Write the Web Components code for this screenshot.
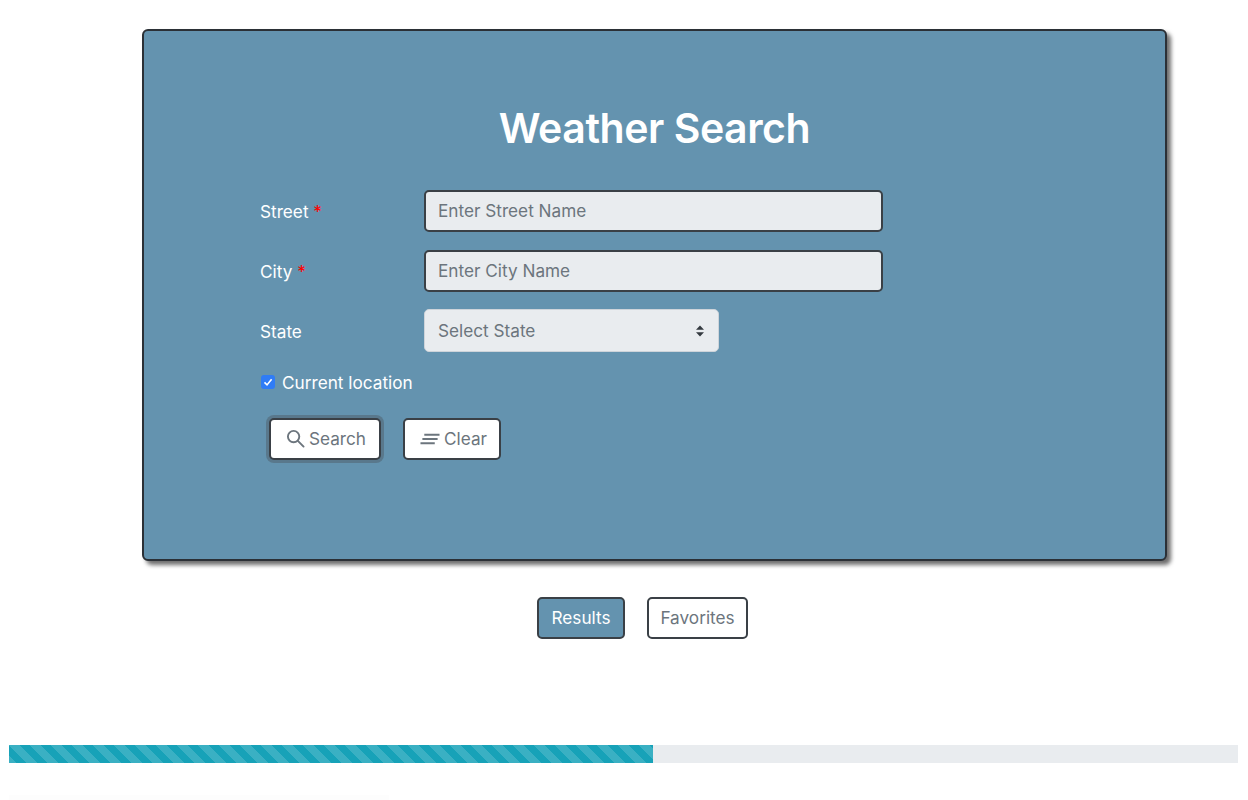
<!DOCTYPE html>
<html lang="en">
<head>
<meta charset="utf-8">
<title>Weather Search</title>
<style>
  html, body { margin: 0; background: #fff; }
  body { font-family: Inter, "Liberation Sans", sans-serif; height: 800px; overflow: hidden; }
</style>
</head>
<body>
<weather-app></weather-app>

<script>
class FormRow extends HTMLElement {
  constructor() {
    super();
    this.attachShadow({ mode: "open" }).innerHTML = `
      <style>
        :host { display: flex; align-items: center; height: 42px; margin-bottom: 18px; }
        .label { width: 164px; color: #fff; font-size: 17.2px; }
        .req { color: #f00; }
      </style>
      <div class="label">${this.getAttribute("label")}${this.hasAttribute("required") ? ' <span class="req">*</span>' : ""}</div>
      <slot></slot>`;
  }
}
customElements.define("form-row", FormRow);

class TextField extends HTMLElement {
  constructor() {
    super();
    this.attachShadow({ mode: "open" }).innerHTML = `
      <style>
        :host { display: block; width: 459px; }
        input {
          box-sizing: border-box; display: block; width: 100%; height: 42px; padding: 0 12px 1px;
          background: #e9ecef; border: 2px solid #3a4046; border-radius: 5px; outline: none;
          font: 17.2px Inter, "Liberation Sans", sans-serif; color: #495057;
        }
        input::placeholder { color: #6c757d; opacity: 1; }
      </style>
      <input type="text" placeholder="${this.getAttribute("placeholder")}">`;
  }
}
customElements.define("text-field", TextField);

class SelectField extends HTMLElement {
  constructor() {
    super();
    this.attachShadow({ mode: "open" }).innerHTML = `
      <style>
        :host {
          display: flex; align-items: center; justify-content: space-between; box-sizing: border-box;
          width: 295px; height: 43px; margin-top: -1px; padding: 0 13px;
          background: #e9ecef; border: 1px solid #ced4da; border-radius: 5px;
          color: #6c757d; font-size: 17.2px;
        }
        svg { display: block; }
      </style>
      <slot></slot>
      <svg width="10" height="12" viewBox="0 0 10 12"><path d="M5 0.5 L9 4.8 H1 Z M1 7.2 H9 L5 11.5 Z" fill="#343a40"/></svg>`;
  }
}
customElements.define("select-field", SelectField);

class CheckField extends HTMLElement {
  constructor() {
    super();
    this.attachShadow({ mode: "open" }).innerHTML = `
      <style>
        :host { display: flex; align-items: center; gap: 7px; color: #fff; font-size: 17.2px; padding-left: 1px; height: 24px; }
        .box { width: 14px; height: 14px; background: #2f7cf6; border-radius: 3px; display: flex; align-items: center; justify-content: center; }
      </style>
      <span class="box"><svg width="12" height="12" viewBox="0 0 12 12"><path d="M2.5 6.4 L5 8.9 L9.6 3.2" fill="none" stroke="#fff" stroke-width="1.6"/></svg></span>
      <slot></slot>`;
  }
}
customElements.define("check-field", CheckField);

class ActionButton extends HTMLElement {
  constructor() {
    super();
    this.attachShadow({ mode: "open" }).innerHTML = `
      <style>
        :host {
          display: inline-flex; align-items: center; justify-content: center; box-sizing: border-box;
          height: 42px; padding-bottom: 1px; background: #fff; color: #6c757d; font-size: 17.2px;
          border: 2px solid #3a4046; border-radius: 5px; gap: 4px;
        }
        :host([focused]) { box-shadow: 0 0 0 3px rgba(73, 80, 87, .4); padding-left: 2px; }
        :host([active]) { background: #6493af; color: #fff; }
        ::slotted(svg) { display: block; }
      </style>
      <slot></slot>`;
  }
}
customElements.define("action-button", ActionButton);

class StripedProgress extends HTMLElement {
  constructor() {
    super();
    this.attachShadow({ mode: "open" }).innerHTML = `
      <style>
        :host { display: block; height: 18px; background: #e9ecef; }
        .bar {
          height: 100%;
          background-color: #17a2b8;
          background-image: linear-gradient(45deg, rgba(255,255,255,.15) 25%, transparent 25%, transparent 50%, rgba(255,255,255,.15) 50%, rgba(255,255,255,.15) 75%, transparent 75%, transparent);
          background-size: 21px 21px;
        }
      </style>
      <div class="bar" style="width:${this.getAttribute("value")}%"></div>`;
  }
}
customElements.define("striped-progress", StripedProgress);

class WeatherCard extends HTMLElement {
  constructor() {
    super();
    this.attachShadow({ mode: "open" }).innerHTML = `
      <style>
        :host {
          display: block; box-sizing: border-box; width: 1025px; height: 532px; margin-left: 142px;
          padding: 70px 116px 0; background: #6493af;
          border: 2px solid #2b3036; border-radius: 6px;
          box-shadow: 4px 4px 4px #6e6e6e;
        }
        h1 { margin: 0 0 35px; text-align: center; color: #fff; font-size: 41px; letter-spacing: -0.45px; line-height: 54px; font-weight: 600; }
        .actions { display: flex; gap: 22px; margin: 24px 0 0 9px; }
      </style>
      <h1>Weather Search</h1>
      <slot></slot>
      <div class="actions"><slot name="actions"></slot></div>`;
  }
}
customElements.define("weather-card", WeatherCard);

class WeatherApp extends HTMLElement {
  constructor() {
    super();
    this.attachShadow({ mode: "open" }).innerHTML = `
      <style>
        :host { display: block; padding-top: 29px; }
        .tabs { display: flex; justify-content: center; gap: 22px; margin: 36px 0 0 37px; }
        striped-progress { margin: 106px 10px 0 9px; }
        .fade { height: 6px; width: 380px; margin: 32px 0 0 9px; background: #fdfdfd; }
      </style>
      <weather-card>
        <form-row label="Street" required><text-field placeholder="Enter Street Name"></text-field></form-row>
        <form-row label="City" required><text-field placeholder="Enter City Name"></text-field></form-row>
        <form-row label="State"><select-field>Select State</select-field></form-row>
        <check-field>Current location</check-field>
        <action-button slot="actions" focused style="width:112px">
          <svg width="19" height="19" viewBox="0 0 20 20" fill="none" stroke="#6c757d" stroke-width="2"><circle cx="8" cy="8" r="6"/><path d="M12.5 12.5 L18.5 18.5" stroke-linecap="round"/></svg>
          Search
        </action-button>
        <action-button slot="actions" style="width:98px;padding-left:3px">
          <svg width="20" height="12" viewBox="0 0 21 12" fill="none" stroke="#6c757d" stroke-width="2"><path d="M4.5 1.5 H20.5 M2.5 6 H18.5 M0.5 10.5 H15.5"/></svg>
          Clear
        </action-button>
      </weather-card>
      <div class="tabs">
        <action-button active style="width:88px">Results</action-button>
        <action-button style="width:101px">Favorites</action-button>
      </div>
      <striped-progress value="52.4"></striped-progress>
      <div class="fade"></div>`;
  }
}
customElements.define("weather-app", WeatherApp);
</script>
</body>
</html>
